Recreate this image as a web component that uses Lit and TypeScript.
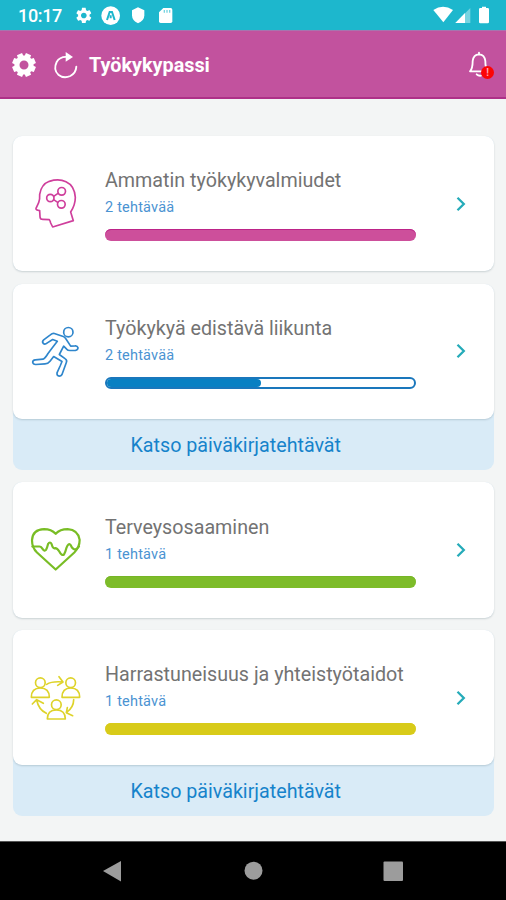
import { LitElement, html, css, nothing, TemplateResult } from "lit";
import { customElement, property } from "lit/decorators.js";

const GEAR =
  "M19.14 12.94c.04-.3.06-.61.06-.94s-.02-.64-.07-.94l2.03-1.58c.18-.14.23-.41.12-.61l-1.92-3.32c-.12-.22-.37-.29-.59-.22l-2.39.96c-.5-.38-1.03-.7-1.62-.94l-.36-2.54c-.04-.24-.24-.41-.48-.41h-3.84c-.24 0-.43.17-.47.41l-.36 2.54c-.59.24-1.13.57-1.62.94l-2.39-.96c-.22-.08-.47 0-.59.22L2.74 8.87c-.12.21-.08.47.12.61l2.03 1.58c-.05.3-.09.63-.09.94s.02.64.07.94l-2.03 1.58c-.18.14-.23.41-.12.61l1.92 3.32c.12.22.37.29.59.22l2.39-.96c.5.38 1.03.7 1.62.94l.36 2.54c.05.24.24.41.48.41h3.84c.24 0 .44-.17.47-.41l.36-2.54c.59-.24 1.13-.56 1.62-.94l2.39.96c.22.08.47 0 .59-.22l1.92-3.32c.12-.22.07-.47-.12-.61l-2.01-1.58zM12 15.6c-1.98 0-3.6-1.62-3.6-3.6s1.62-3.6 3.6-3.6 3.6 1.62 3.6 3.6-1.62 3.6-3.6 3.6z";

// Eight broad teeth around a ring, computed on a circle.
const cogPath = (() => {
  const points: string[] = [];
  for (let i = 0; i < 8; i++) {
    const a = (i * Math.PI) / 4 + Math.PI / 8;
    for (const [r, d] of [[9.6, -0.31], [12.1, -0.23], [12.1, 0.23], [9.6, 0.31]]) {
      points.push(`${(12 + r * Math.cos(a + d)).toFixed(2)} ${(12 + r * Math.sin(a + d)).toFixed(2)}`);
    }
  }
  return `M${points.join("L")}ZM16.5 12a4.5 4.5 0 1 0-9 0a4.5 4.5 0 1 0 9 0Z`;
})();

interface Area {
  title: string;
  tasks: string;
  tone: string;
  value: number;
  icon: TemplateResult;
  diary?: boolean;
}

const headIcon = html`<svg viewBox="0 3 240 225">
  <path d="M98 186L160 167L152 141Q166 120 166 97Q164 62 138 50Q116 40 88 49Q64 58 59 88Q60 102 56 113L48 130Q46 135 59 137L60 155Q60 163 69 163L88 164Q91 168 92 174Z"/>
  <circle cx="91" cy="99" r="11"/><circle cx="125" cy="79" r="11.5"/><circle cx="124" cy="118" r="11.5"/>
  <path d="M101 94L114 85M101 104L113 112"/></svg>`;

const runnerIcon = html`<svg viewBox="0 -4.5 240 225">
  <circle cx="145" cy="50" r="14"/>
  <path d="M132 64L103 54Q97 53 91 58L71 73Q65 79 70 84Q75 88 82 82L98 72L112 77Q98 95 84 114Q76 128 69 131L46 133Q38 134 38 140Q39 147 47 147L75 145Q84 145 90 137L101 123L126 138L121 150L111 172Q110 181 118 182Q123 182 126 177L139 141Q142 134 136 130L118 117L131 92L140 101Q143 105 150 105L166 105Q174 103 174 97Q172 90 165 91L152 92L139 72Q136 67 132 64Z"/></svg>`;

const heartIcon = html`<svg class="bold" viewBox="0 -8.5 240 225">
  <path d="M107 164L51 113Q36 98 36 76Q38 44 72 43Q94 43 107 57Q120 43 143 43Q174 45 179 75Q179 97 163 113Z"/>
  <path d="M37 95L58 95Q63 95 66 100Q73 111 78 105Q81 100 84 88Q90 78 95 88Q99 103 105 100Q111 99 118 110Q125 124 132 119Q136 112 139 100Q146 82 152 91Q157 103 164 104Q172 103 177 95"/></svg>`;

const peopleIcon = html`<svg viewBox="0 0 240 225">
  <circle cx="61" cy="68" r="14.5"/><path d="M34 112Q34 84 61 84Q88 84 88 112Z"/>
  <circle cx="152" cy="68" r="14.5"/><path d="M126 112Q126 84 152 84Q179 84 179 112Z"/>
  <circle cx="109" cy="134" r="14.5"/><path d="M82 177Q82 150 109 150Q136 150 136 177Z"/>
  <path d="M80 73Q96 63 129 66M117 50L129 66L113 76"/>
  <path d="M161 119Q161 142 139 158M142 143L139 158L158 167"/>
  <path d="M79 160Q56 149 50 120M37 132L50 119L70 130"/></svg>`;

const areas: Area[] = [
  { title: "Ammatin työkykyvalmiudet", tasks: "2 tehtävää", tone: "pink", value: 100, icon: headIcon },
  { title: "Työkykyä edistävä liikunta", tasks: "2 tehtävää", tone: "blue", value: 50, icon: runnerIcon, diary: true },
  { title: "Terveysosaaminen", tasks: "1 tehtävä", tone: "green", value: 100, icon: heartIcon },
  { title: "Harrastuneisuus ja yhteistyötaidot", tasks: "1 tehtävä", tone: "yellow", value: 100, icon: peopleIcon, diary: true },
];

@customElement("status-bar")
class StatusBar extends LitElement {
  static styles = css`
    :host { display: flex; height: 30px; background: #1db7cd; color: #fff; padding-left: 18px; box-sizing: border-box; justify-content: space-between; }
    .time { font-size: 18px; line-height: 32px; font-weight: 500; width: 57px; letter-spacing: -0.35px; }
    .left { display: flex; }
    svg { display: block; height: 30px; fill: #fff; }
    .faint { opacity: 0.4; }
    .cut { fill: #1db7cd; opacity: 0.6; }
    .mark { fill: none; stroke: #1db7cd; stroke-width: 6; }
  `;
  render() {
    return html`<div class="left">
        <div class="time">10:17</div>
        <svg width="100" viewBox="225 0 300 90">
          <g transform="translate(222.9 17.9) scale(2.38)"><path d=${GEAR} /></g>
          <circle cx="332" cy="47" r="28" />
          <path class="mark" d="M321 60L329 36H336L344 60M332 46V55" />
          <path d="M414 22L433 31V46Q433 62 414 70Q396 62 396 46V31Z" />
          <path d="M490 24H512Q517 24 517 29V64Q517 69 512 69H482Q477 69 477 64V37Z" />
          <path class="cut" d="M491 30h4v8h-4zM499 30h4v8h-4zM507 30h4v8h-4z" />
        </svg>
      </div>
      <svg width="73" viewBox="540 0 219 90">
        <path d="M541 30Q570 11 600 30L571 67Z" />
        <path class="faint" d="M607 69L652 24V69Z" />
        <path d="M607 69L636 39V69Z" />
        <path d="M687 20H699V24H704Q708 24 708 28V66Q708 70 704 70H682Q678 70 678 66V28Q678 24 682 24H687Z" />
      </svg>`;
  }
}

@customElement("app-header")
class AppHeader extends LitElement {
  static styles = css`
    :host { display: flex; align-items: center; height: 69px; box-sizing: border-box; background: #c2529e; border-bottom: 2px solid #ae3088; border-top: 1px solid #a775ae; padding: 1px 8px 0 12px; color: #fff; }
    svg { display: block; overflow: visible; }
    .cog { fill: #fff; fill-rule: evenodd; width: 24px; height: 24px; }
    .reload { width: 24px; height: 26px; margin-left: 18px; }
    .line { fill: none; stroke: #fff; stroke-width: 5.5; stroke-linecap: round; stroke-linejoin: round; }
    .solid { fill: #fff; }
    h1 { margin: 0 auto 0 11px; padding-top: 2px; font-size: 19.8px; line-height: 24px; font-weight: 700; }
    .bell { position: relative; width: 30px; height: 30px; }
    .badge { position: absolute; left: 13px; top: 16px; width: 13px; height: 13px; border-radius: 50%; background: #fb0505; font-size: 10px; line-height: 13px; font-weight: 700; text-align: center; color: #ffa5b5; }
  `;
  render() {
    return html`<svg class="cog" viewBox="0 0 24 24"><path d=${cogPath} /></svg>
      <svg class="reload" viewBox="162 151 72 78">
        <path class="line" d="M202 166Q180 164 170 181Q159 204 175 219Q191 232 211 223Q228 214 229 195" />
        <path class="solid" d="M197 151L219 166L197 180Z" />
      </svg>
      <h1>Työkykypassi</h1>
      <div class="bell">
        <svg width="30" height="30" viewBox="645 150 90 90">
          <path class="line" d="M651 214Q659 206 659 183Q661 164 678 163Q695 164 697 183Q697 206 705 214ZM678 158V162M671 223Q676 228 684 227" />
        </svg>
        <span class="badge">!</span>
      </div>`;
  }
}

@customElement("area-card")
class AreaCard extends LitElement {
  @property({ attribute: false }) area!: Area;
  static styles = css`
    :host { display: block; }
    .pink { --tone: #cd4f9b; --edge: #bd2388; --line: #cf3f9c; }
    .blue { --tone: #0880c3; --edge: #1a77bc; --line: #2f86cc; }
    .green { --tone: #7dbc29; --edge: #76b526; --line: #79bd25; }
    .yellow { --tone: #d8cb19; --edge: #d8cb19; --line: #ded32a; }
    .wrap { background: #d9ebf7; border-radius: 9px; }
    .card { display: grid; grid-template-columns: 92.5px 311px 1fr; height: 135.4px; box-sizing: border-box; background: #fff; border-radius: 9px; box-shadow: 0 1px 2px rgba(40, 70, 80, 0.2); }
    .icon { padding: 30px 0 0 7.5px; }
    .icon svg { display: block; width: 80px; height: 75px; fill: none; stroke: var(--line); stroke-width: 5; stroke-linejoin: round; stroke-linecap: round; }
    .icon .bold { stroke-width: 6.6; }
    .body { padding-top: 32.4px; }
    h2 { margin: 0; font-size: 19.7px; line-height: 25px; font-weight: 400; color: #737373; white-space: nowrap; }
    .tasks { font-size: 14.5px; letter-spacing: 0.2px; line-height: 20px; margin-top: 5px; color: #4a93d2; }
    .track { margin-top: 11px; height: 12px; box-sizing: border-box; border: 2px solid var(--edge); border-radius: 6px; background: #fff; overflow: hidden; }
    .fill { height: 100%; background: var(--tone); border-radius: 0 4px 4px 0; }
    .full { border: 0; box-shadow: inset 0 1px 0 var(--edge); background: var(--tone); }
    .full .fill { background: none; }
    .go { display: flex; align-items: center; padding-left: 38.5px; }
    .go svg { display: block; fill: none; stroke: #25abb9; stroke-width: 2.3; }
    .diary { height: 50.6px; box-sizing: border-box; padding-right: 35px; text-align: center; font-size: 19.7px; line-height: 54px; color: #1683cb; }
  `;
  render() {
    const a = this.area;
    return html`<section class="wrap ${a.tone}">
      <div class="card">
        <div class="icon">${a.icon}</div>
        <div class="body">
          <h2>${a.title}</h2>
          <div class="tasks">${a.tasks}</div>
          <div class="track ${a.value === 100 ? "full" : ""}"><div class="fill" style="width:${a.value}%"></div></div>
        </div>
        <div class="go"><svg width="12" height="16" viewBox="0 0 12 16"><path d="M2.5 1.8L8.8 8L2.5 14.2" /></svg></div>
      </div>
      ${a.diary ? html`<div class="diary">Katso päiväkirjatehtävät</div>` : nothing}
    </section>`;
  }
}

@customElement("app-root")
class AppRoot extends LitElement {
  static styles = css`
    :host { display: flex; flex-direction: column; height: 900px; background: #f3f5f5; font-family: Roboto, "Liberation Sans", sans-serif; overflow: hidden; }
    main { flex: 1; display: flex; flex-direction: column; gap: 12.4px; padding: 37px 12px 0 12.5px; }
    nav { height: 59px; box-sizing: border-box; background: #000; border-top: 1px solid #555; }
    nav svg { display: block; fill: #9c9c9c; }
  `;
  render() {
    return html`<status-bar></status-bar>
      <app-header></app-header>
      <main>${areas.map((a) => html`<area-card .area=${a}></area-card>`)}</main>
      <nav>
        <svg width="506" height="58" viewBox="0 842 506 58">
          <path d="M103 871L121 861V881.5Z" />
          <circle cx="253.5" cy="870.7" r="9" />
          <rect x="383.5" y="861.5" width="19.5" height="19.5" rx="1" />
        </svg>
      </nav>`;
  }
}
